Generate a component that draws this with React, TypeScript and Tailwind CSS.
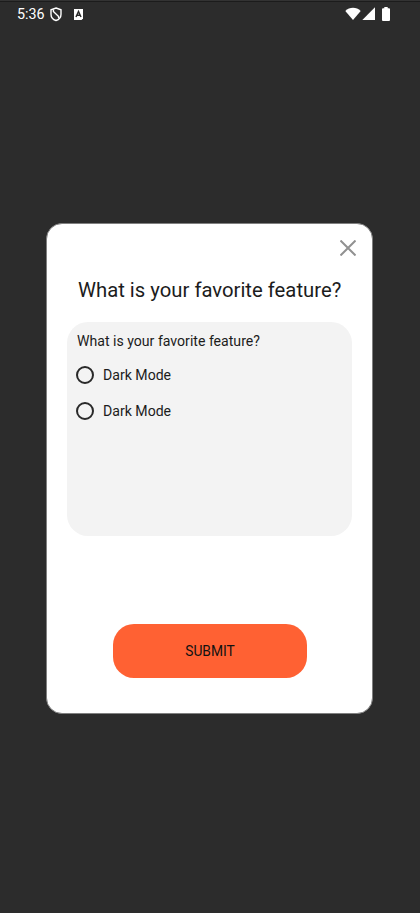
import { useState } from "react";

const options = ["Dark Mode", "Dark Mode"];

function StatusBar() {
  return (
    <header className="flex h-7 items-start border-t border-[#333333] text-white">
      <div className="flex h-[27px] w-full items-start border-t border-[#1c1c1c]">
        <span className="ml-[17px] mt-[3px] w-[33px] whitespace-nowrap text-[14.3px] leading-[19px]">5:36</span>
        <svg className="mt-[5px]" width="12" height="15" viewBox="0 0 12 15" fill="none" stroke="white" strokeWidth="1.4">
          <path d="M6 1 11 2.8v4.400c0 3-2.100 5.400-5 6.300-2.900-.9-5-3.300-5-6.300V2.800z" />
          <path d="M3.400 2.600V4.500L8.600 9.600V11.300" strokeWidth="1.400" />
        </svg>
        <svg className="ml-3 mt-[7px]" width="9" height="11" viewBox="0 0 9 11">
          <path d="M0 0h9v9.500L7.500 11H0z" fill="white" />
          <path d="M2 8 4.500 2.500 7 8M3 6.200h3" fill="none" stroke="#2b2b2b" strokeWidth="1.500" />
        </svg>
        <svg className="ml-auto mt-[5px]" width="16" height="13" viewBox="0 0 16 13" fill="white">
          <path d="M0.300 4C4.500-.3 11.500-.3 15.700 4L8 13z" />
        </svg>
        <svg className="ml-px mt-[5px]" width="13" height="13" viewBox="0 0 13 13" fill="white">
          <path d="M13 .3V13H.3z" />
        </svg>
        <svg className="ml-[7px] mr-[30px] mt-[5px]" width="8" height="14" viewBox="0 0 8 14" fill="white">
          <path d="M2.300 0h3.400v1.300H7q1 0 1 1V13q0 1-1 1H1q-1 0-1-1V2.300q0-1 1-1h1.300z" />
        </svg>
      </div>
    </header>
  );
}

export default function App() {
  const [selected, setSelected] = useState<number | null>(null);

  return (
    <main className="flex h-[913px] w-[420px] flex-col overflow-hidden bg-[#2c2c2c] font-['Roboto',sans-serif] text-[#1c1c1c]">
      <StatusBar />
      <section className="ml-[46px] mt-[195px] flex h-[491px] w-[327px] flex-col rounded-[16px] border border-[#808080] bg-white">
        <button aria-label="Close" className="ml-[293px] mt-4 size-4">
          <svg width="16" height="16" viewBox="0 0 16 16" stroke="#919191" strokeWidth="2" fill="none">
            <path d="M.5.5l15 15M15.500.5l-15 15" />
          </svg>
        </button>
        <h1 className="ml-[31px] mt-[22px] whitespace-nowrap text-[20.3px] leading-6">What is your favorite feature?</h1>
        <div className="ml-5 mt-5 h-[214px] w-[285px] rounded-[21px] bg-[#f3f3f3] pl-[10px] pt-[9px] text-[14.1px]">
          <p className="whitespace-nowrap leading-5">What is your favorite feature?</p>
          <div className="mt-[6px]">
            {options.map((option, index) => (
              <button key={index} onClick={() => setSelected(index)} className="flex h-9 items-center">
                <span className="-ml-px flex size-[18px] items-center justify-center rounded-full border-2 border-[#292929]">
                  {selected === index && <span className="size-2 rounded-full bg-[#292929]" />}
                </span>
                <span className="ml-[9px] leading-5">{option}</span>
              </button>
            ))}
          </div>
        </div>
        <button className="ml-[66px] mt-[88px] h-[54px] w-[194px] rounded-[21px] bg-[#ff6133] pt-px text-[13.8px] text-[#111111]">
          SUBMIT
        </button>
      </section>
    </main>
  );
}
